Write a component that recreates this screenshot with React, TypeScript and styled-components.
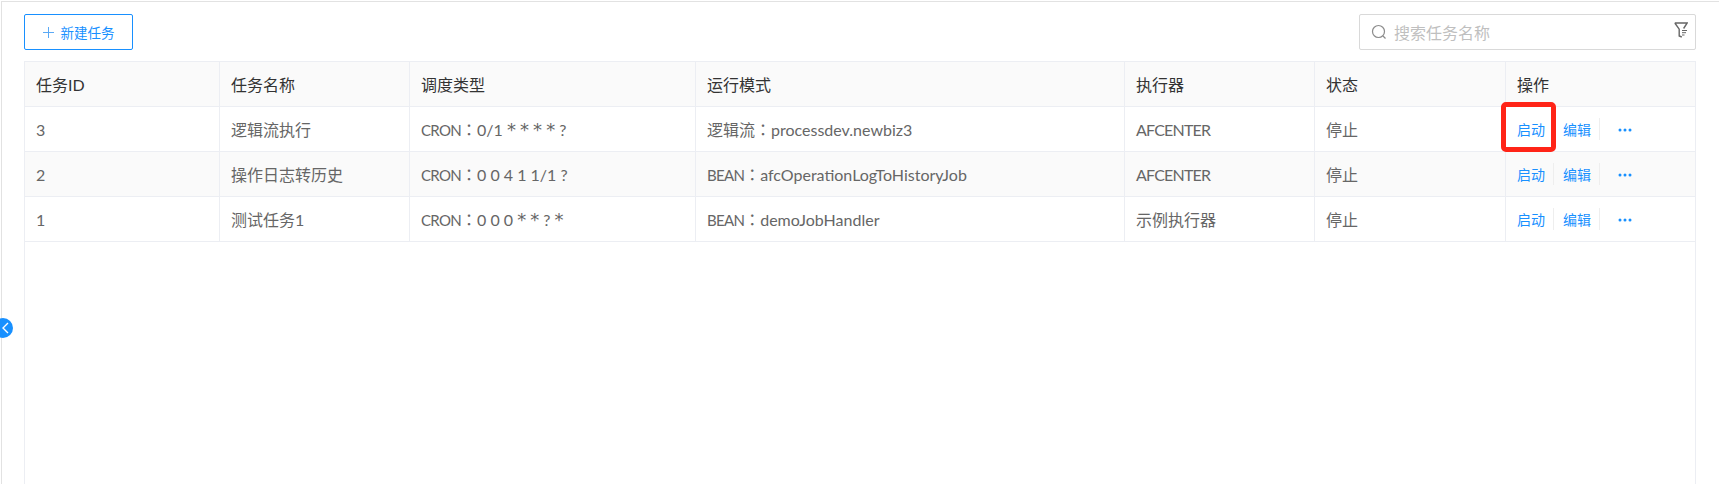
import React from "react";
import styled, { createGlobalStyle } from "styled-components";

const Global = createGlobalStyle`
  html, body { margin: 0; padding: 0; background: #fff; height: 100%; overflow: hidden; }
  #root { height: 100%; }
  * { box-sizing: border-box; }
`;
const FONT = `Lato, "Noto Sans CJK SC", sans-serif`;

const Page = styled.div`
  position: relative;
  height: 484px;
  margin-top: 1px;
  margin-left: 1px;
  border-top: 1px solid #e2e2e2;
  border-left: 1px solid #e2e2e2;
  padding: 12px 23px 0 22px;
  font-family: ${FONT};
  display: flex;
  flex-direction: column;
  gap: 12px;
`;
const Toolbar = styled.div`
  display: flex;
  justify-content: space-between;
  height: 35px;
`;
const NewButton = styled.button`
  width: 109px;
  height: 36px;
  border: 1px solid #1890ff;
  border-radius: 2px;
  background: #fff;
  color: #1890ff;
  font: 13.5px ${FONT};
  display: flex;
  align-items: center;
  justify-content: center;
  gap: 7px;
  padding: 0;
`;
const Search = styled.div`
  position: relative;
  width: 337px;
  height: 36px;
  border: 1px solid #d9d9d9;
  border-radius: 2px;
  display: flex;
  align-items: center;
  padding-left: 11px;
  gap: 7px;
  color: #bfbfbf;
  font-size: 16px;
`;
const FilterIcon = styled.svg`
  position: absolute;
  right: 7px;
  top: 7px;
`;
const TableWrap = styled.div`
  flex: 1;
  border-left: 1px solid #eceef3;
  border-right: 1px solid #eceef3;
  border-top: 1px solid #eceef3;
`;
const Table = styled.table`
  width: 100%;
  border-collapse: separate;
  border-spacing: 0;
  table-layout: fixed;
  font-size: 16px;
  color: #666;
`;
const Th = styled.th`
  height: 45px;
  padding: 0 11px;
  background: #fafafa;
  font-weight: 400;
  text-align: left;
  color: #333;
  border-bottom: 1px solid #eceef3;
  border-right: 1px solid #eceef3;
  &:last-child { border-right: 0; }
`;
const Row = styled.tr<{ $striped?: boolean }>`
  background: ${(p) => (p.$striped ? "#fafafa" : "#fff")};
`;
const Td = styled.td`
  position: relative;
  height: 45px;
  padding: 0 11px;
  border-bottom: 1px solid #eceef3;
  border-right: 1px solid #eceef3;
  white-space: nowrap;
  &:last-child { border-right: 0; }
`;
const Colon = styled.span`
  font-family: "Noto Sans CJK TC", sans-serif;
`;
const Caps = styled.span<{ $tight?: boolean }>`
  font-size: ${(p) => (p.$tight ? "15px" : "16px")};
  letter-spacing: ${(p) => (p.$tight ? "-0.7px" : "-0.8px")};
`;
const Star = styled.span`
  font-family: "DejaVu Sans", sans-serif;
  font-size: 18px;
  line-height: 1;
`;
const Actions = styled.div`
  display: flex;
  align-items: center;
  color: #1890ff;
  font-size: 14px;
`;
const Action = styled.span`
  width: 27px;
  white-space: nowrap;
`;
const Sep = styled.i<{ $hidden?: boolean }>`
  width: 1px;
  height: 22px;
  margin: 0 9px 0 9px;
  background: ${(p) => (p.$hidden ? "transparent" : "#eeeeee")};
`;
const More = styled.svg`
  margin: 1px 0 0 9px;
`;
const Highlight = styled.div`
  position: absolute;
  left: -5px;
  top: -5px;
  width: 55px;
  height: 50px;
  border: 5px solid #ff2417;
  border-radius: 5px;
  pointer-events: none;
`;
const Collapse = styled.div`
  position: absolute;
  left: -9px;
  top: 316px;
  width: 20px;
  height: 20px;
  border-radius: 50%;
  background: #1890ff;
  display: flex;
  align-items: center;
  justify-content: center;
  padding-left: 6px;
`;

const widths = [195, 190, 286, 429, 190, 191, 189];
const heads = ["任务ID", "任务名称", "调度类型", "运行模式", "执行器", "状态", "操作"];
const rows = [
  ["3", "逻辑流执行", "CRON", "0/1 * * * * ?", "逻辑流", "processdev.newbiz3", "AFCENTER", "停止"],
  ["2", "操作日志转历史", "CRON", "0 0 4 1 1/1 ?", "BEAN", "afcOperationLogToHistoryJob", "AFCENTER", "停止"],
  ["1", "测试任务1", "CRON", "0 0 0 * * ? *", "BEAN", "demoJobHandler", "示例执行器", "停止"],
];

const withStars = (text: string) =>
  text.split(/(\*)/).map((part, i) => (part === "*" ? <Star key={i}>*</Star> : part));

export default function App() {
  return (
    <>
      <Global />
      <Page>
        <Collapse>
          <svg width="8" height="12" viewBox="0 0 8 12" fill="none" stroke="#fff" strokeWidth="1.4">
            <path d="M6 1 1 6l5 5" />
          </svg>
        </Collapse>
        <Toolbar>
          <NewButton>
            <svg width="11" height="11" viewBox="0 0 11 11" stroke="#5aa9f5" strokeWidth="1">
              <path d="M5.5 0v11M0 5.5h11" />
            </svg>
            新建任务
          </NewButton>
          <Search>
            <svg width="16" height="16" viewBox="0 0 16 16" fill="none" stroke="#8c8c8c" strokeWidth="1.2">
              <circle cx="7.5" cy="7.5" r="6" />
              <path d="m12 12 2.5 2.5" />
            </svg>
            搜索任务名称
            <FilterIcon width="14" height="16" viewBox="0 0 14 16" fill="none" stroke="#666" strokeWidth="1.4">
              <path d="M.8 1h12.4L9.6 6.5M.8 1l4.4 6.2V14l2.6 1" />
              <path d="M8 8.5h5M8 10.7h4M8 13h2.5" strokeWidth="1" />
            </FilterIcon>
          </Search>
        </Toolbar>
        <TableWrap>
          <Table>
            <colgroup>
              {widths.map((w, i) => (
                <col key={i} style={{ width: w }} />
              ))}
            </colgroup>
            <thead>
              <tr>
                {heads.map((h) => (
                  <Th key={h}>{h}</Th>
                ))}
              </tr>
            </thead>
            <tbody>
              {rows.map((r, i) => (
                <Row key={r[0]} $striped={i === 1}>
                  <Td>{r[0]}</Td>
                  <Td>{r[1]}</Td>
                  <Td>
                    <Caps $tight>{r[2]}</Caps>
                    <Colon>：</Colon>
                    {withStars(r[3])}
                  </Td>
                  <Td>
                    {r[4] === "BEAN" ? <Caps $tight>{r[4]}</Caps> : r[4]}
                    <Colon>：</Colon>
                    {r[5]}
                  </Td>
                  <Td>{r[6] === "AFCENTER" ? <Caps>{r[6]}</Caps> : r[6]}</Td>
                  <Td>{r[7]}</Td>
                  <Td>
                    <Actions>
                      <Action>启动</Action>
                      <Sep $hidden={i === 0} />
                      <Action>编辑</Action>
                      <Sep />
                      <More width="14" height="4" viewBox="0 0 14 4" fill="#1890ff">
                        <circle cx="2" cy="2" r="1.5" />
                        <circle cx="7" cy="2" r="1.5" />
                        <circle cx="12" cy="2" r="1.5" />
                      </More>
                    </Actions>
                    {i === 0 && <Highlight />}
                  </Td>
                </Row>
              ))}
            </tbody>
          </Table>
        </TableWrap>
      </Page>
    </>
  );
}
